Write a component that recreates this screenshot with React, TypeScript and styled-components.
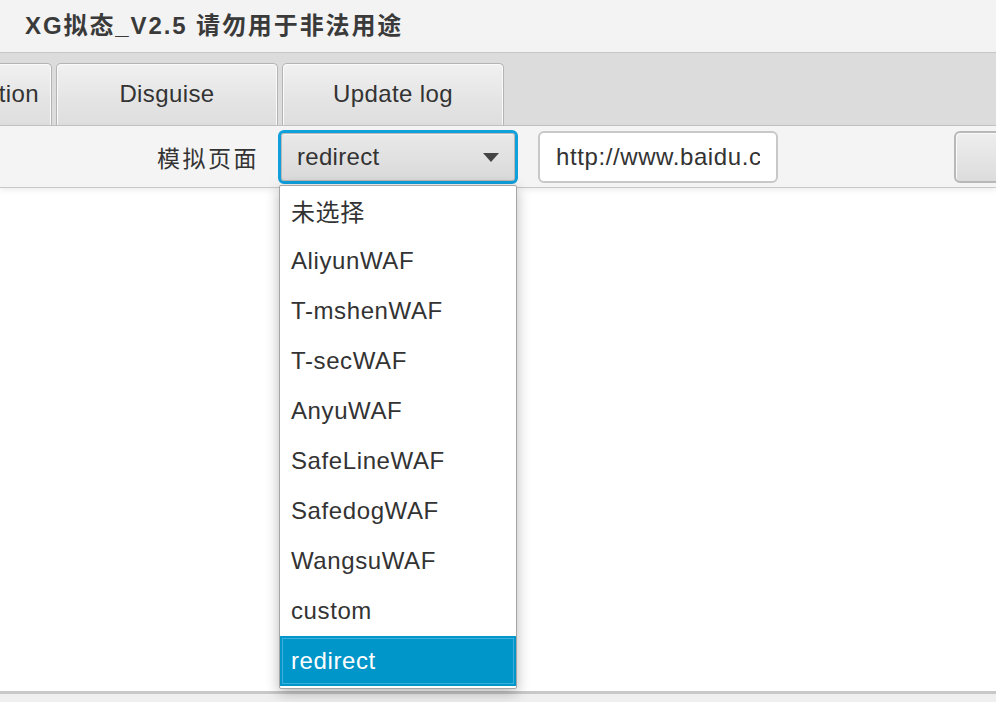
import React from 'react';
import styled, { createGlobalStyle } from 'styled-components';

const GlobalStyle = createGlobalStyle`
  html, body {
    margin: 0;
    padding: 0;
    overflow: hidden;
    background: #ffffff;
  }
  * { box-sizing: border-box; }
`;

const FONT = `"Liberation Sans", Arial, "Noto Sans CJK SC", sans-serif`;

const Shell = styled.div`
  position: relative;
  display: flex;
  flex-direction: column;
  width: 996px;
  height: 702px;
  overflow: hidden;
  font-family: ${FONT};
  color: #333333;
`;

const TitleBar = styled.div`
  height: 53px;
  flex-shrink: 0;
  display: flex;
  align-items: center;
  padding-left: 25px;
  padding-bottom: 6px;
  background: #f3f3f3;
  border-bottom: 1px solid #c6c6c6;
  font-size: 24px;
  font-weight: bold;
  letter-spacing: 1.9px;
  color: #3a3a3a;
`;

const TabHeader = styled.div`
  height: 73px;
  flex-shrink: 0;
  display: flex;
  align-items: flex-end;
  gap: 4px;
  padding-top: 11px;
  margin-left: -122px;
  background: #dcdcdc;
  border-bottom: 1px solid #c4c4c4;
`;

const Tab = styled.div<{ $width: number }>`
  width: ${(p) => p.$width}px;
  height: 62px;
  flex-shrink: 0;
  display: flex;
  align-items: center;
  justify-content: center;
  font-size: 24px;
  letter-spacing: 0.4px;
  color: #333333;
  border: 1px solid #b4b4b4;
  border-bottom: none;
  border-radius: 5px 5px 0 0;
  background: linear-gradient(#f1f1f1, #e4e4e4 60%, #dedede);
  box-shadow: inset 1px 1px 0 #fafafa, inset -1px 0 0 #fafafa;
  padding-bottom: 2px;
`;

const FormRow = styled.div`
  position: relative;
  z-index: 1;
  height: 62px;
  flex-shrink: 0;
  display: flex;
  align-items: center;
  background: #f4f4f4;
  border-bottom: 1px solid #c8c8c8;
  box-shadow: 0 2px 6px rgba(0, 0, 0, 0.08);
`;

const FieldLabel = styled.div`
  width: 259px;
  flex-shrink: 0;
  text-align: right;
  font-size: 23px;
  letter-spacing: 2.5px;
  color: #333333;
`;

const Combo = styled.div`
  width: 240px;
  height: 54px;
  margin-left: 19px;
  flex-shrink: 0;
  display: flex;
  align-items: center;
  justify-content: space-between;
  padding: 0 16px 0 16px;
  font-size: 24px;
  letter-spacing: 0.3px;
  color: #333333;
  border: 3px solid #10a0dc;
  border-radius: 6px;
  background: linear-gradient(#e9e9e9, #d9d9d9);
  box-shadow: inset 0 0 0 1px #b8b8b8, inset 0 2px 0 #f4f4f4;
`;

const Arrow = styled.span`
  width: 0;
  height: 0;
  border-left: 8px solid transparent;
  border-right: 8px solid transparent;
  border-top: 9px solid #444444;
  margin-top: 2px;
`;

const TextField = styled.div`
  width: 240px;
  height: 52px;
  margin-left: 20px;
  flex-shrink: 0;
  display: flex;
  align-items: center;
  padding: 0 0 0 16px;
  overflow: hidden;
  white-space: nowrap;
  font-size: 24px;
  letter-spacing: 0.6px;
  color: #333333;
  background: #ffffff;
  border: 2px solid #c8c8c8;
  border-radius: 6px;
`;

const ClipText = styled.span`
  display: block;
  width: 204px;
  overflow: hidden;
`;

const ActionButton = styled.div`
  width: 120px;
  height: 52px;
  margin-left: 176px;
  flex-shrink: 0;
  border: 2px solid #b8b8b8;
  border-radius: 6px;
  background: linear-gradient(#eeeeee, #dcdcdc);
  box-shadow: inset 1px 1px 0 #fafafa;
`;

const Body = styled.div`
  flex: 1;
  background: #ffffff;
`;

const Footer = styled.div`
  height: 11px;
  flex-shrink: 0;
  background: #efefef;
  border-top: 3px solid #c8c8c8;
`;

const Popup = styled.div`
  position: absolute;
  left: 279px;
  top: 185px;
  width: 238px;
  z-index: 5;
  display: flex;
  flex-direction: column;
  padding-bottom: 2px;
  background: #ffffff;
  border: 1px solid #a6a6a6;
  border-radius: 2px;
  box-shadow: 0 4px 14px rgba(0, 0, 0, 0.28);
`;

const Option = styled.div<{ $selected?: boolean }>`
  height: 50px;
  display: flex;
  align-items: center;
  padding-left: 11px;
  padding-bottom: 1px;
  font-size: 24px;
  letter-spacing: 0.6px;
  color: ${(p) => (p.$selected ? '#ffffff' : '#333333')};
  background: ${(p) => (p.$selected ? '#0096c9' : 'transparent')};
  box-shadow: ${(p) =>
    p.$selected ? 'inset 0 0 0 2px #0096c9, inset 0 0 0 3px #3cb0dc' : 'none'};
`;

const options = [
  '未选择',
  'AliyunWAF',
  'T-mshenWAF',
  'T-secWAF',
  'AnyuWAF',
  'SafeLineWAF',
  'SafedogWAF',
  'WangsuWAF',
  'custom',
  'redirect',
];

export default function App() {
  const selected = 'redirect';
  return (
    <Shell>
      <GlobalStyle />
      <TitleBar>XG拟态_V2.5 请勿用于非法用途</TitleBar>
      <TabHeader>
        <Tab $width={174}>Configuration</Tab>
        <Tab $width={222}>Disguise</Tab>
        <Tab $width={222}>Update log</Tab>
      </TabHeader>
      <FormRow>
        <FieldLabel>模拟页面</FieldLabel>
        <Combo>
          <span>{selected}</span>
          <Arrow />
        </Combo>
        <TextField>
          <ClipText>http://www.baidu.com</ClipText>
        </TextField>
        <ActionButton />
      </FormRow>
      <Body />
      <Footer />
      <Popup>
        {options.map((o) => (
          <Option key={o} $selected={o === selected}>
            {o}
          </Option>
        ))}
      </Popup>
    </Shell>
  );
}
